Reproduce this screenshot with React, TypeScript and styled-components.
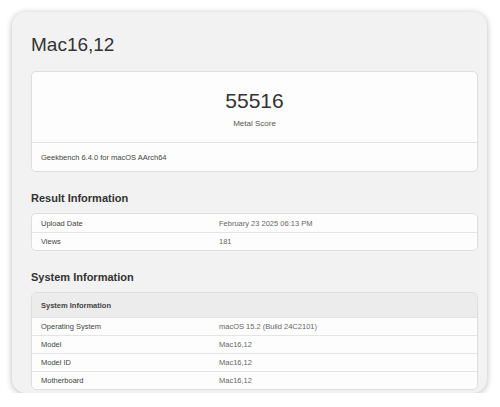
import React from "react";
import styled, { createGlobalStyle } from "styled-components";

const GlobalStyle = createGlobalStyle`
  *, *::before, *::after {
    box-sizing: border-box;
  }
  html, body {
    margin: 0;
    padding: 0;
    background: #ffffff;
  }
  body {
    font-family: "Liberation Sans", Arial, sans-serif;
    color: #333;
  }
`;

const Page = styled.div`
  padding: 12px 13px 0 12px;
`;

const Card = styled.div`
  background: #f2f2f2;
  border-radius: 14px;
  box-shadow: 0 1px 6px rgba(0, 0, 0, 0.28);
  padding: 21px 9px 2px 19px;
  height: 381px;
  overflow: hidden;
`;

const Title = styled.h1`
  margin: 0 0 14px;
  font-size: 19px;
  line-height: 24px;
  font-weight: 400;
  color: #333;
`;

const Panel = styled.div`
  background: #fdfdfd;
  border: 1px solid #dedede;
  border-radius: 5px;
  overflow: hidden;
`;

const ScoreBlock = styled.div`
  padding: 16px 0 13px;
  text-align: center;
  border-bottom: 1px solid #e2e2e2;
`;

const ScoreValue = styled.div`
  font-size: 21px;
  line-height: 26px;
  color: #333;
`;

const ScoreLabel = styled.div`
  margin-top: 5px;
  font-size: 8px;
  line-height: 10px;
  color: #555;
`;

const ScoreFooter = styled.div`
  height: 28px;
  display: flex;
  align-items: center;
  padding: 0 9px;
  font-size: 7.5px;
  color: #444;
`;

const Heading = styled.h2`
  margin: 20px 0 8px;
  font-size: 11px;
  line-height: 13px;
  font-weight: 700;
  color: #333;
`;

const Row = styled.div<{ $header?: boolean }>`
  display: grid;
  grid-template-columns: 178px 1fr;
  align-items: center;
  height: ${(p) => (p.$header ? "24px" : "18px")};
  padding-left: 9px;
  font-size: 7.5px;
  background: ${(p) => (p.$header ? "#ececec" : "transparent")};
  font-weight: ${(p) => (p.$header ? 700 : 400)};
  & + & {
    border-top: 1px solid #e4e4e4;
  }
`;

const Label = styled.span`
  color: #444;
`;

const Value = styled.span`
  color: #666;
`;

const resultRows = [
  { label: "Upload Date", value: "February 23 2025 06:13 PM" },
  { label: "Views", value: "181" },
];

const systemRows = [
  { label: "Operating System", value: "macOS 15.2 (Build 24C2101)" },
  { label: "Model", value: "Mac16,12" },
  { label: "Model ID", value: "Mac16,12" },
  { label: "Motherboard", value: "Mac16,12" },
];

export default function App() {
  return (
    <Page>
      <GlobalStyle />
      <Card>
        <Title>Mac16,12</Title>
        <Panel>
          <ScoreBlock>
            <ScoreValue>55516</ScoreValue>
            <ScoreLabel>Metal Score</ScoreLabel>
          </ScoreBlock>
          <ScoreFooter>Geekbench 6.4.0 for macOS AArch64</ScoreFooter>
        </Panel>

        <Heading>Result Information</Heading>
        <Panel>
          {resultRows.map((r) => (
            <Row key={r.label}>
              <Label>{r.label}</Label>
              <Value>{r.value}</Value>
            </Row>
          ))}
        </Panel>

        <Heading>System Information</Heading>
        <Panel>
          <Row $header>
            <Label>System Information</Label>
          </Row>
          {systemRows.map((r) => (
            <Row key={r.label}>
              <Label>{r.label}</Label>
              <Value>{r.value}</Value>
            </Row>
          ))}
        </Panel>
      </Card>
    </Page>
  );
}
